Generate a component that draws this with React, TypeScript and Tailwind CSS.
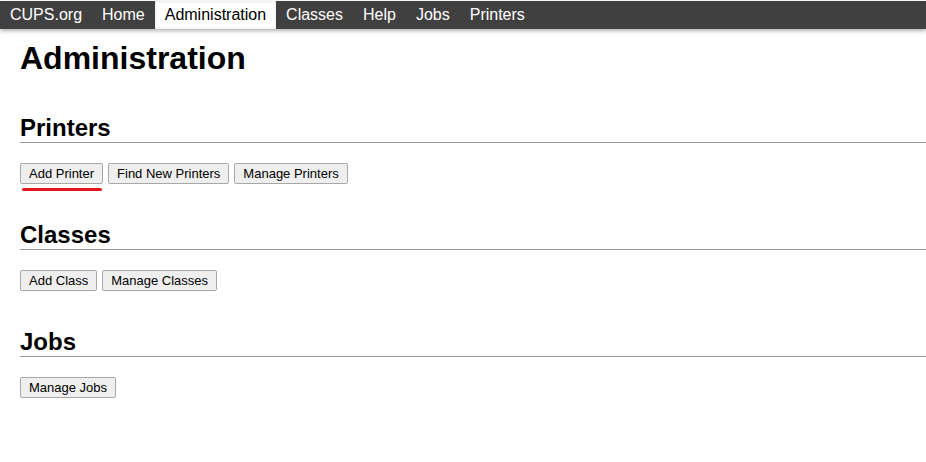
import React from 'react';

const navItems = [
  { label: 'CUPS.org' },
  { label: 'Home' },
  { label: 'Administration', active: true },
  { label: 'Classes' },
  { label: 'Help' },
  { label: 'Jobs' },
  { label: 'Printers' },
];

const sections = [
  { title: 'Printers', buttons: ['Add Printer', 'Find New Printers', 'Manage Printers'], marked: 'Add Printer' },
  { title: 'Classes', buttons: ['Add Class', 'Manage Classes'] },
  { title: 'Jobs', buttons: ['Manage Jobs'] },
];

const Button: React.FC<{ label: string; marked?: boolean }> = ({ label, marked }) => (
  <span className="relative flex">
    <button className="block h-[21px] px-2 py-[2px] text-[13px] leading-[15px] text-black bg-[#efefef] border border-[#a8a8a8] rounded-[2px]">
      {label}
    </button>
    {/* red annotation under the button */}
    {marked && (
      <span className="absolute left-[2px] right-[1px] top-full mt-[4px] h-[3px] rounded-full bg-[#e3151d]" />
    )}
  </span>
);

export default function App() {
  return (
    <div className="min-h-[462px] bg-white text-black" style={{ fontFamily: '"Liberation Sans", Arial, sans-serif' }}>
      <nav className="mt-px flex h-7 bg-[#404040] shadow-[0_2px_4px_rgba(0,0,0,0.3)]">
        {navItems.map((item) => (
          <a
            key={item.label}
            className={`px-[10px] text-[16px] leading-7 ${
              item.active ? 'bg-white text-black shadow-[inset_0_0_3px_rgba(0,0,0,0.15)]' : 'text-white'
            }`}
          >
            {item.label}
          </a>
        ))}
      </nav>

      <div className="pl-5">
        <h1 className="mt-[11px] text-[32px] leading-9 font-bold">Administration</h1>

        {sections.map((s, i) => (
          <div key={s.title} className={i === 0 ? 'mt-[38px]' : 'mt-[37px]'}>
            <h2 className="text-[24px] leading-7 font-bold border-b border-[#999999]">{s.title}</h2>
            <div className="mt-5 flex gap-[5px]">
              {s.buttons.map((b) => (
                <Button key={b} label={b} marked={s.marked === b} />
              ))}
            </div>
          </div>
        ))}
      </div>
    </div>
  );
}
